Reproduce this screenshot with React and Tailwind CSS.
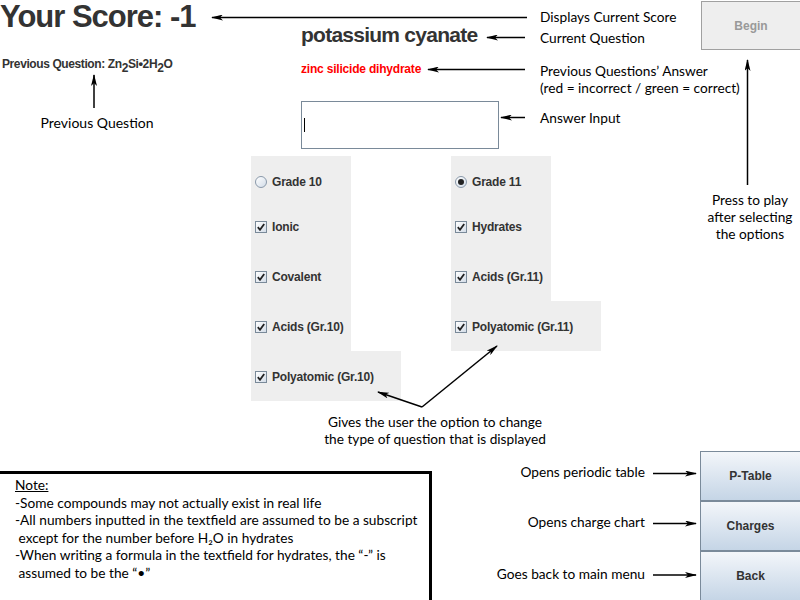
import React from 'react'

const ui = { fontFamily: '"Liberation Sans", Arial, sans-serif' }
const note = { fontFamily: 'Lato, "Open Sans", sans-serif' }

function CheckBox() {
  return (
    <span className="inline-flex h-[12px] w-[12px] shrink-0 items-center justify-center border border-[#7a8a99] bg-gradient-to-br from-white to-[#d4dde8]">
      <svg width="8" height="8" viewBox="0 0 8 8">
        <path d="M0.8 4.2 L3 6.8 L7.2 1" fill="none" stroke="#222" strokeWidth="1.8" />
      </svg>
    </span>
  )
}

function Radio({ checked }) {
  return (
    <span className="inline-flex h-[12px] w-[12px] shrink-0 items-center justify-center rounded-full border border-[#8a99aa] bg-gradient-to-br from-white to-[#d2dce8]">
      {checked ? <span className="h-[6px] w-[6px] rounded-full bg-[#222]" /> : null}
    </span>
  )
}

function Option({ label, radio, checked, wide, first }) {
  return (
    <div
      className={
        'flex items-center gap-[5px] bg-[#eeeeee] pl-[4px] ' +
        (wide ? 'w-[150px] ' : 'w-[100px] ') +
        (first ? 'h-[45px] pt-[6px]' : 'h-[50px] pt-px')
      }
    >
      {radio ? <Radio checked={checked} /> : <CheckBox />}
      <span className="whitespace-nowrap text-[12px] font-bold tracking-[-0.2px] text-[#333]">{label}</span>
    </div>
  )
}

function SideButton({ children }) {
  return (
    <div className="flex h-[50px] items-center justify-center border-y border-l border-[#7a8a9a] bg-gradient-to-b from-[#f3f6fa] to-[#c5d5e6] text-[12px] font-bold text-[#333]">
      {children}
    </div>
  )
}

function Arrows() {
  const line = { stroke: '#000', strokeWidth: 1.5, markerEnd: 'url(#ah)' }
  return (
    <svg className="pointer-events-none absolute inset-0" width="800" height="600" viewBox="0 0 800 600">
      <defs>
        <marker id="ah" markerWidth="12" markerHeight="6" refX="11" refY="3" orient="auto" markerUnits="userSpaceOnUse">
          <path d="M0,0 L12,3 L0,6 L3,3 z" fill="#000" />
        </marker>
      </defs>
      <line x1="527" y1="17.5" x2="212" y2="17.5" {...line} />
      <line x1="525" y1="37.5" x2="487" y2="37.5" {...line} />
      <line x1="525" y1="69.5" x2="428" y2="69.5" {...line} />
      <line x1="525" y1="117.5" x2="501" y2="117.5" {...line} />
      <line x1="94" y1="108" x2="94" y2="75" {...line} />
      <line x1="747.5" y1="185" x2="747.5" y2="60" {...line} />
      <line x1="422" y1="407" x2="378" y2="392" {...line} />
      <line x1="422" y1="407" x2="497" y2="346" {...line} />
      <line x1="653" y1="473.5" x2="696" y2="473.5" {...line} />
      <line x1="653" y1="523.5" x2="696" y2="523.5" {...line} />
      <line x1="653" y1="575" x2="696" y2="575" {...line} />
    </svg>
  )
}

export default function App() {
  return (
    <div className="relative flex h-[600px] w-[800px] overflow-hidden bg-white text-black">
      <div className="flex w-[700px] flex-col">
        {/* top: score, question, answer field, notes */}
        <div className="flex h-[150px]">
          <div className="flex w-[300px] flex-col">
            <div style={ui} className="h-[34px] whitespace-nowrap text-[31px] font-bold leading-[34px] tracking-[-1px] text-[#333]">
              Your Score: -1
            </div>
            <div style={ui} className="mt-[23px] ml-[2px] whitespace-nowrap text-[12px] font-bold leading-[14px] tracking-[-0.4px] text-[#333]">
              Previous Question: Zn<span className="relative top-[4px] text-[12px]">2</span>Si
              <span className="text-[13px]">•</span>2H<span className="relative top-[4px] text-[12px]">2</span>O
            </div>
            <div style={note} className="mt-[43px] w-[194px] text-center text-[14px] leading-[17px]">
              Previous Question
            </div>
          </div>

          <div style={ui} className="flex w-[240px] flex-col">
            <div className="mt-[23px] ml-[1px] text-[21px] font-bold leading-[24px] tracking-[-0.75px] text-[#333]">
              potassium cyanate
            </div>
            <div className="mt-[15px] ml-[1px] text-[12px] font-bold leading-[14px] tracking-[-0.2px] text-[#ff0000]">
              zinc silicide dihydrate
            </div>
            <div className="mt-[25px] ml-[1px] flex h-[48px] w-[198px] items-center border border-[#7a8a99] bg-white pl-[2px]">
              <span className="h-[14px] w-px bg-black" />
            </div>
          </div>

          <div style={note} className="flex w-[160px] flex-col whitespace-nowrap text-[13.7px] leading-[17px]">
            <div className="mt-[8px]">Displays Current Score</div>
            <div className="mt-[4px]">Current Question</div>
            <div className="mt-[16px]">Previous Questions’ Answer</div>
            <div>(red = incorrect / green = correct)</div>
            <div className="mt-[13px]">Answer Input</div>
          </div>
        </div>

        {/* option panels */}
        <div style={ui} className="mt-[6px] flex h-[245px] items-start pl-[251px]">
          <div className="flex flex-col">
            <Option label="Grade 10" radio first />
            <Option label="Ionic" />
            <Option label="Covalent" />
            <Option label="Acids (Gr.10)" />
            <Option label="Polyatomic (Gr.10)" wide />
          </div>
          <div className="ml-[50px] flex flex-col">
            <Option label="Grade 11" radio checked first />
            <Option label="Hydrates" />
            <Option label="Acids (Gr.11)" />
            <Option label="Polyatomic (Gr.11)" wide />
          </div>
        </div>

        <div style={note} className="h-[50px] pt-[12px] pl-[285px] text-[13.7px] leading-[17px]">
          <div className="w-[300px] text-center">
            Gives the user the option to change
            <br />
            the type of question that is displayed
          </div>
        </div>

        {/* note box and button notes */}
        <div style={note} className="flex h-[149px] text-[13.7px]">
          <div className="mt-[20px] w-[432px] border-t-[3px] border-r-[3px] border-black pt-[2px] pl-[15px] leading-[17.6px] whitespace-pre">
            <div className="underline">Note:</div>
            <div>-Some compounds may not actually exist in real life</div>
            <div>-All numbers inputted in the textfield are assumed to be a subscript</div>
            <div> except for the number before H₂O in hydrates</div>
            <div>-When writing a formula in the textfield for hydrates, the “-” is</div>
            <div> assumed to be the “•”</div>
          </div>
          <div className="flex flex-1 flex-col items-end pr-[55px] leading-[17px] whitespace-nowrap">
            <div className="mt-[12px]">Opens periodic table</div>
            <div className="mt-[33px]">Opens charge chart</div>
            <div className="mt-[35px]">Goes back to main menu</div>
          </div>
        </div>
      </div>

      {/* right column */}
      <div className="flex w-[100px] flex-col">
        <div style={ui} className="mt-px ml-px flex h-[49px] items-center justify-center border-y border-l border-[#a0a0a0] bg-[#eeeeee] text-[12px] font-bold text-[#999]">
          Begin
        </div>
        <div style={note} className="mt-[141px] text-center text-[13.7px] leading-[17px]">
          Press to play
          <br />
          after selecting
          <br />
          the options
        </div>
        <div style={ui} className="mt-auto h-[149px]">
          <SideButton>P-Table</SideButton>
          <SideButton>Charges</SideButton>
          <SideButton>Back</SideButton>
        </div>
      </div>

      <Arrows />
    </div>
  )
}
